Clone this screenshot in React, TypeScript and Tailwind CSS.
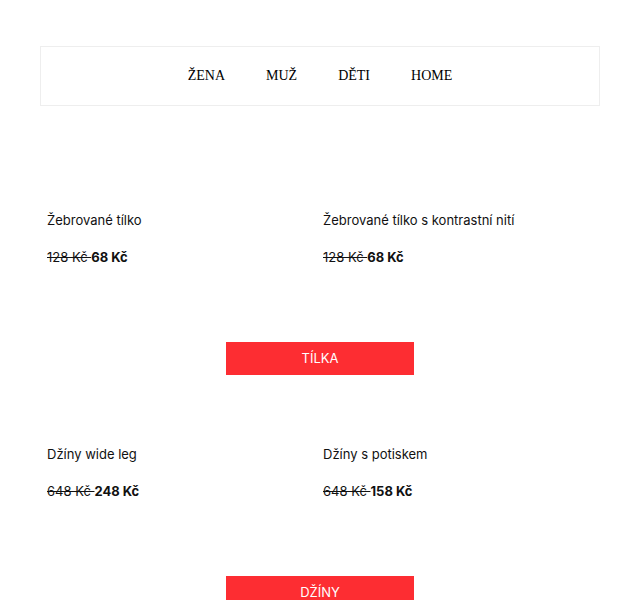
export default function App() {
  const sections = [
    {
      button: "Tílka",
      products: [
        { name: "Žebrované tílko", oldPrice: "128 Kč", price: "68 Kč" },
        { name: "Žebrované tílko s kontrastní nití", oldPrice: "128 Kč", price: "68 Kč" },
      ],
    },
    {
      button: "Džíny",
      products: [
        { name: "Džíny wide leg", oldPrice: "648 Kč", price: "248 Kč" },
        { name: "Džíny s potiskem", oldPrice: "648 Kč", price: "158 Kč" },
      ],
    },
  ];

  return (
    <div className="min-h-[600px] bg-white px-[40px] pt-[46px] text-[#111]">
      <nav className="flex h-[60px] items-center justify-center gap-[41px] border border-[#eeeeee] pb-[1px] font-['Liberation_Serif',serif] text-[14px] text-black">
        <a href="#">ŽENA</a>
        <a href="#">MUŽ</a>
        <a href="#">DĚTI</a>
        <a href="#">HOME</a>
      </nav>

      <div className="pt-[35px] font-['Inter',sans-serif]">
        {sections.map((section) => (
          <section key={section.button} className="pt-[69px]">
            <div className="grid grid-cols-[276px_1fr] pl-[7px]">
              {section.products.map((p) => (
                <div key={p.name}>
                  <h3 className="text-[13px] leading-[20px]">{p.name}</h3>
                  <p className="mt-[17px] whitespace-pre text-[13px] leading-[20px]">
                    <span className="line-through">{p.oldPrice + " "}</span>
                    <span className="font-bold">{p.price}</span>
                  </p>
                </div>
              ))}
            </div>
            <div className="mt-[75px] flex justify-center">
              <button className="h-[33px] w-[188px] bg-[#fd2d32] text-[13px] uppercase text-white">
                {section.button}
              </button>
            </div>
          </section>
        ))}
      </div>
    </div>
  );
}
